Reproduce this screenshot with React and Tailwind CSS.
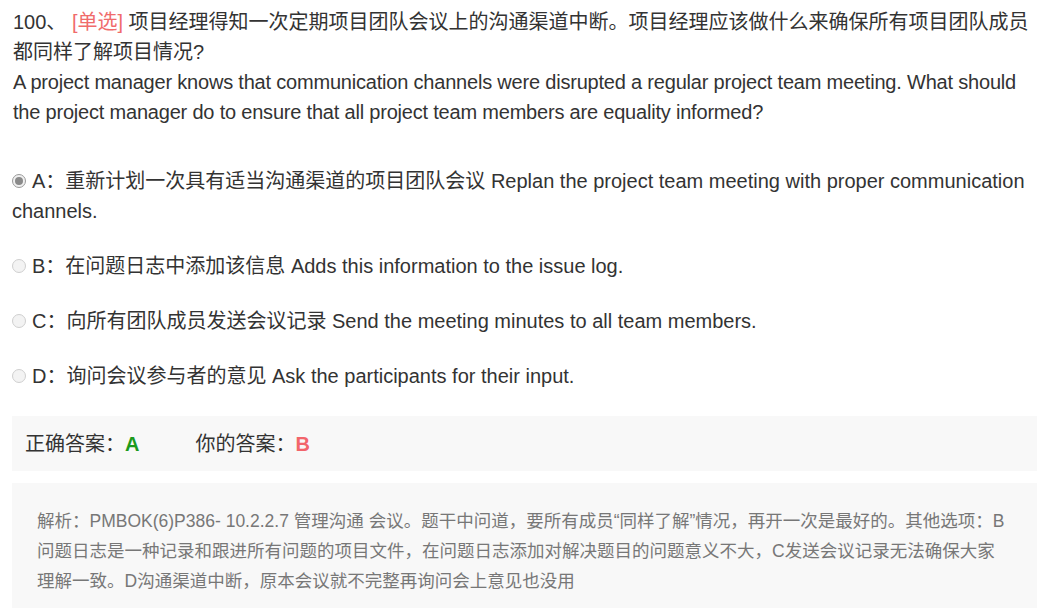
import React from "react";

const font = { fontFamily: '"Liberation Sans", Arial, "Noto Sans CJK SC", sans-serif' };

function Radio({ checked }) {
  return checked ? (
    <span className="inline-flex w-[14px] h-[14px] rounded-full border border-[#9a9a9a] bg-[#f0f0f0] items-center justify-center shrink-0">
      <span className="w-[8px] h-[8px] rounded-full bg-[#8a8a8a]" />
    </span>
  ) : (
    <span className="inline-block w-[14px] h-[14px] rounded-full border border-[#cfcfcf] bg-[#f3f3f3] shrink-0" />
  );
}

export default function App() {
  const options = [
    { key: "A", text: "重新计划一次具有适当沟通渠道的项目团队会议 Replan the project team meeting with proper communication channels.", checked: true },
    { key: "B", text: "在问题日志中添加该信息 Adds this information to the issue log." },
    { key: "C", text: "向所有团队成员发送会议记录 Send the meeting minutes to all team members." },
    { key: "D", text: "询问会议参与者的意见 Ask the participants for their input." },
  ];

  return (
    <div className="min-h-screen bg-white pl-[12px] pr-[14px] pt-[7px] text-[#333]" style={font}>
      {/* Question */}
      <div className="text-[20px] leading-[30px] pl-[1px]">
        100、 <span className="text-[#f06b6b]">[单选]</span> 项目经理得知一次定期项目团队会议上的沟通渠道中断。项目经理应该做什么来确保所有项目团队成员都同样了解项目情况?
        <br />
        <span className="tracking-[-0.2px]">
          A project manager knows that communication channels were disrupted a regular project team meeting. What should the project manager do to ensure that all project team members are equality informed?
        </span>
      </div>

      {/* Options */}
      <div className="mt-[39px] flex flex-col gap-[25px]">
        {options.map((o) => (
          <div key={o.key} className="text-[20px] leading-[30px]">
            <span className="inline-flex align-middle mr-[6px] relative -top-[2px]">
              <Radio checked={o.checked} />
            </span>
            {o.key}：{o.text}
          </div>
        ))}
      </div>

      {/* Answer */}
      <div className="mt-[25px] h-[55px] bg-[#f8f8f8] flex items-center pl-[13px] text-[20px]">
        <span>正确答案：</span>
        <span className="font-bold text-[#1c9a1c]">A</span>
        <span className="ml-[56px]">你的答案：</span>
        <span className="font-bold text-[#f2656b]">B</span>
      </div>

      {/* Analysis */}
      <div className="mt-[12px] bg-[#f8f8f8] pt-[23px] pb-[20px] px-[25px] text-[17.5px] leading-[30px] text-[#777]">
        解析：PMBOK(6)P386- 10.2.2.7 管理沟通 会议。题干中问道，要所有成员“同样了解”情况，再开一次是最好的。其他选项：B问题日志是一种记录和跟进所有问题的项目文件，在问题日志添加对解决题目的问题意义不大，C发送会议记录无法确保大家理解一致。D沟通渠道中断，原本会议就不完整再询问会上意见也没用
      </div>
    </div>
  );
}
